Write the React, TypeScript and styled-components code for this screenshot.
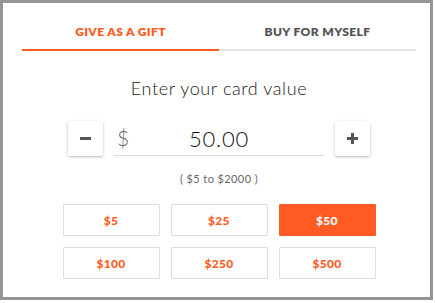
import React, { useState } from "react";
import styled, { createGlobalStyle } from "styled-components";

const ORANGE = "#ff5b22";

const Global = createGlobalStyle`
  html, body { margin: 0; padding: 0; background: #fff; }
  body { font-family: Lato, "Open Sans", sans-serif; }
`;

const Frame = styled.div`
  box-sizing: border-box;
  width: 433px;
  height: 300px;
  border: 3px solid #959595;
  padding: 0 14px 0 19px;
  display: flex;
  flex-direction: column;
  align-items: center;
`;

const Tabs = styled.div`
  display: flex;
  width: 100%;
`;

const Tab = styled.button<{ $active?: boolean }>`
  flex: 1;
  background: none;
  border: none;
  border-bottom: 2px solid ${(p) => (p.$active ? ORANGE : "#e3e3e3")};
  padding: 21px 0 9px;
  font-family: Lato, sans-serif;
  font-weight: 800;
  font-size: 12px;
  line-height: 16px;
  letter-spacing: 0.4px;
  color: ${(p) => (p.$active ? ORANGE : "#555")};
  cursor: pointer;
`;

const Title = styled.div`
  margin-top: 26px;
  font-size: 18px;
  line-height: 22px;
  color: #1a1a1a;
  font-weight: 300;
  letter-spacing: 0.6px;
`;

const InputRow = styled.div`
  margin-top: 22px;
  display: flex;
  align-items: center;
  gap: 11px;
`;

const StepButton = styled.button`
  box-sizing: border-box;
  width: 35px;
  height: 35px;
  border: none;
  background: #fff;
  border-radius: 2px;
  box-shadow: 0 1px 3px rgba(0, 0, 0, 0.28);
  display: flex;
  align-items: center;
  justify-content: center;
  padding: 0;
  cursor: pointer;
`;

const Field = styled.div`
  box-sizing: border-box;
  width: 210px;
  height: 35px;
  border-bottom: 1px solid #dcdcdc;
  display: flex;
  align-items: center;
  position: relative;
`;

const Currency = styled.span`
  position: absolute;
  left: 3px;
  top: 4px;
  font-size: 21px;
  color: #666;
  font-weight: 300;
`;

const Amount = styled.span`
  flex: 1;
  text-align: center;
  font-size: 22px;
  color: #111;
  font-weight: 300;
  letter-spacing: 0.8px;
`;

const Range = styled.div`
  margin-top: 16px;
  font-size: 11px;
  line-height: 14px;
  color: #666;
  letter-spacing: 0.4px;
`;

const Grid = styled.div`
  margin-top: 18px;
  display: grid;
  grid-template-columns: repeat(3, 97px);
  grid-auto-rows: 32px;
  column-gap: 11px;
  row-gap: 11px;
`;

const Preset = styled.button<{ $active?: boolean }>`
  box-sizing: border-box;
  border: 1px solid ${(p) => (p.$active ? ORANGE : "#dedede")};
  background: ${(p) => (p.$active ? ORANGE : "#fff")};
  color: ${(p) => (p.$active ? "#fff" : ORANGE)};
  font-family: Lato, sans-serif;
  font-weight: 900;
  font-size: 12px;
  letter-spacing: 0.3px;
  border-radius: 1px;
  cursor: pointer;
`;

const presets = [5, 25, 50, 100, 250, 500];

export default function App() {
  const [tab, setTab] = useState(0);
  const [value, setValue] = useState(50);
  return (
    <>
      <Global />
      <Frame>
        <Tabs>
          <Tab $active={tab === 0} onClick={() => setTab(0)}>GIVE AS A GIFT</Tab>
          <Tab $active={tab === 1} onClick={() => setTab(1)}>BUY FOR MYSELF</Tab>
        </Tabs>
        <Title>Enter your card value</Title>
        <InputRow>
          <StepButton onClick={() => setValue((v) => Math.max(5, v - 1))} aria-label="decrease">
            <svg width="11" height="11" viewBox="0 0 11 11">
              <rect x="0" y="4" width="11" height="3" fill="#555" />
            </svg>
          </StepButton>
          <Field>
            <Currency>$</Currency>
            <Amount>{value.toFixed(2)}</Amount>
          </Field>
          <StepButton onClick={() => setValue((v) => Math.min(2000, v + 1))} aria-label="increase">
            <svg width="11" height="11" viewBox="0 0 11 11">
              <rect x="0" y="4" width="11" height="3" fill="#555" />
              <rect x="4" y="0" width="3" height="11" fill="#555" />
            </svg>
          </StepButton>
        </InputRow>
        <Range>( $5 to $2000 )</Range>
        <Grid>
          {presets.map((p) => (
            <Preset key={p} $active={value === p} onClick={() => setValue(p)}>
              ${p}
            </Preset>
          ))}
        </Grid>
      </Frame>
    </>
  );
}
